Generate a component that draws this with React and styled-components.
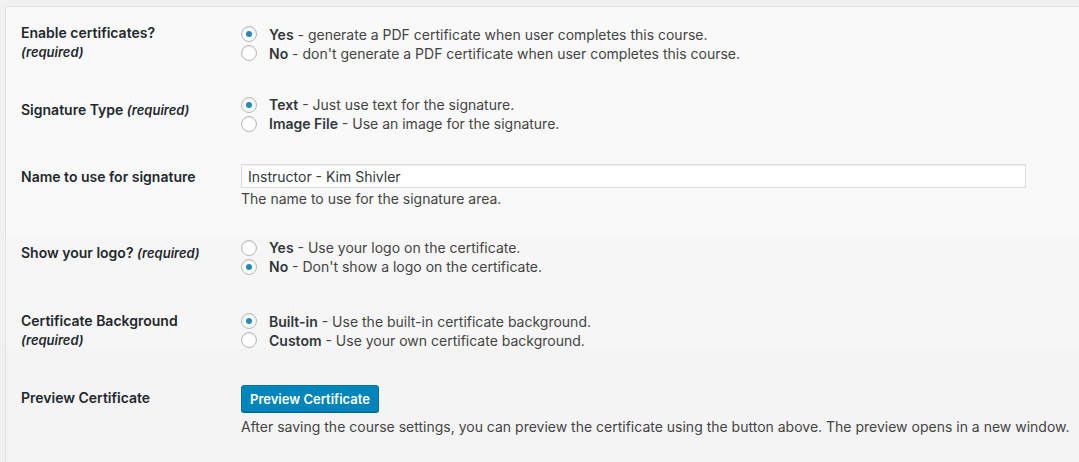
import React from "react";
import styled, { createGlobalStyle } from "styled-components";

const GlobalStyle = createGlobalStyle`
    html, body {
        margin: 0;
        padding: 0;
        background: #f1f1f1;
        font-family: Inter, "Noto Sans", "Liberation Sans", sans-serif;
        font-size: 14px;
        color: #444;
        overflow: hidden;
    }
`;

const Panel = styled.div`
    box-sizing: border-box;
    margin: 6px 0 0 5px;
    height: calc(100vh - 6px);
    border-top: 1px solid #e2e2e2;
    border-left: 1px solid #e2e2e2;
    padding: 1px 0 0 15px;
    background: linear-gradient(
        to bottom,
        #f9f9f9 0,
        #f9f9f9 228px,
        #f6f6f6 228px,
        #f6f6f6 341px,
        #f4f4f4 341px
    );
`;

const Row = styled.div`
    display: grid;
    grid-template-columns: 220px 1fr;
    align-items: center;
    padding: ${(p) => p.$top ?? 16}px 0 ${(p) => p.$bottom ?? 16}px;
`;

// $shift nudges a centred label; $start pins it to the top of the field instead
const Label = styled.div`
    font-weight: 600;
    color: #23282d;
    line-height: 19px;
    align-self: ${(p) => (p.$start ? "start" : "center")};
    margin-top: ${(p) => (p.$start ? p.$start : 0)}px;
    position: relative;
    top: ${(p) => p.$shift || 0}px;
`;

const Required = styled.em`
    font-size: 13px;
    font-weight: 600;
    font-style: italic;
`;

const Field = styled.div`
    display: flex;
    flex-direction: column;
    align-items: flex-start;
`;

const Option = styled.label`
    display: flex;
    align-items: center;
    height: 19px;
    line-height: 19px;
    white-space: nowrap;
    cursor: pointer;
`;

const Radio = styled.span`
    box-sizing: border-box;
    width: 16px;
    height: 16px;
    margin-right: 12px;
    border-radius: 50%;
    border: 1px solid #b4b9be;
    background: #fff;
    box-shadow: inset 0 1px 2px rgba(0, 0, 0, 0.1);
    display: flex;
    align-items: center;
    justify-content: center;
    flex-shrink: 0;

    &::before {
        content: "";
        width: 6px;
        height: 6px;
        border-radius: 50%;
        background: #1e8cbe;
        display: ${(p) => (p.$checked ? "block" : "none")};
    }
`;

const Strong = styled.strong`
    font-weight: 600;
    color: #32373c;
`;

const TextInput = styled.input`
    box-sizing: border-box;
    width: 785px;
    height: 24px;
    margin: 0;
    padding: 2px 6px;
    border: 1px solid #ddd;
    box-shadow: inset 0 1px 2px rgba(0, 0, 0, 0.07);
    background: #fff;
    font-family: inherit;
    font-size: 14px;
    color: #32373c;
    outline: none;
`;

const Description = styled.p`
    margin: ${(p) => p.$top || 2}px 0 0;
    line-height: 18px;
    color: #444;
`;

const Button = styled.button`
    box-sizing: border-box;
    height: 27px;
    padding: 0 8px;
    border: 1px solid #0073aa;
    border-radius: 3px;
    background: #0085ba;
    box-shadow: 0 1px 0 #006799;
    color: #fff;
    font-family: inherit;
    font-size: 13px;
    font-weight: 600;
    cursor: pointer;
`;

function RadioGroup({ options }) {
    return (
        <Field>
            {options.map((o) => (
                <Option key={o.title}>
                    <Radio $checked={o.checked} />
                    <span>
                        <Strong>{o.title}</Strong> - {o.text}
                    </span>
                </Option>
            ))}
        </Field>
    );
}

export default function App() {
    return (
        <>
            <GlobalStyle />
            <Panel>
                <Row $bottom={15}>
                    <Label $shift={-1}>
                        Enable certificates?
                        <br />
                        <Required>(required)</Required>
                    </Label>
                    <RadioGroup
                        options={[
                            { title: "Yes", text: "generate a PDF certificate when user completes this course.", checked: true },
                            { title: "No", text: "don't generate a PDF certificate when user completes this course." },
                        ]}
                    />
                </Row>
                <Row $top={17}>
                    <Label $shift={-4}>
                        Signature Type <Required>(required)</Required>
                    </Label>
                    <RadioGroup
                        options={[
                            { title: "Text", text: "Just use text for the signature.", checked: true },
                            { title: "Image File", text: "Use an image for the signature." },
                        ]}
                    />
                </Row>
                <Row $top={15} $bottom={15}>
                    <Label $start={3}>Name to use for signature</Label>
                    <Field>
                        <TextInput defaultValue="Instructor - Kim Shivler" />
                        <Description>The name to use for the signature area.</Description>
                    </Field>
                </Row>
                <Row $top={15} $bottom={18}>
                    <Label $shift={-4}>
                        Show your logo? <Required>(required)</Required>
                    </Label>
                    <RadioGroup
                        options={[
                            { title: "Yes", text: "Use your logo on the certificate." },
                            { title: "No", text: "Don't show a logo on the certificate.", checked: true },
                        ]}
                    />
                </Row>
                <Row $top={17} $bottom={17}>
                    <Label>
                        Certificate Background
                        <br />
                        <Required>(required)</Required>
                    </Label>
                    <RadioGroup
                        options={[
                            { title: "Built-in", text: "Use the built-in certificate background.", checked: true },
                            { title: "Custom", text: "Use your own certificate background." },
                        ]}
                    />
                </Row>
                <Row $top={18}>
                    <Label $start={3}>Preview Certificate</Label>
                    <Field>
                        <Button type="button">Preview Certificate</Button>
                        <Description $top={6}>
                            After saving the course settings, you can preview the certificate using the button above. The preview opens in a new window.
                        </Description>
                    </Field>
                </Row>
            </Panel>
        </>
    );
}
